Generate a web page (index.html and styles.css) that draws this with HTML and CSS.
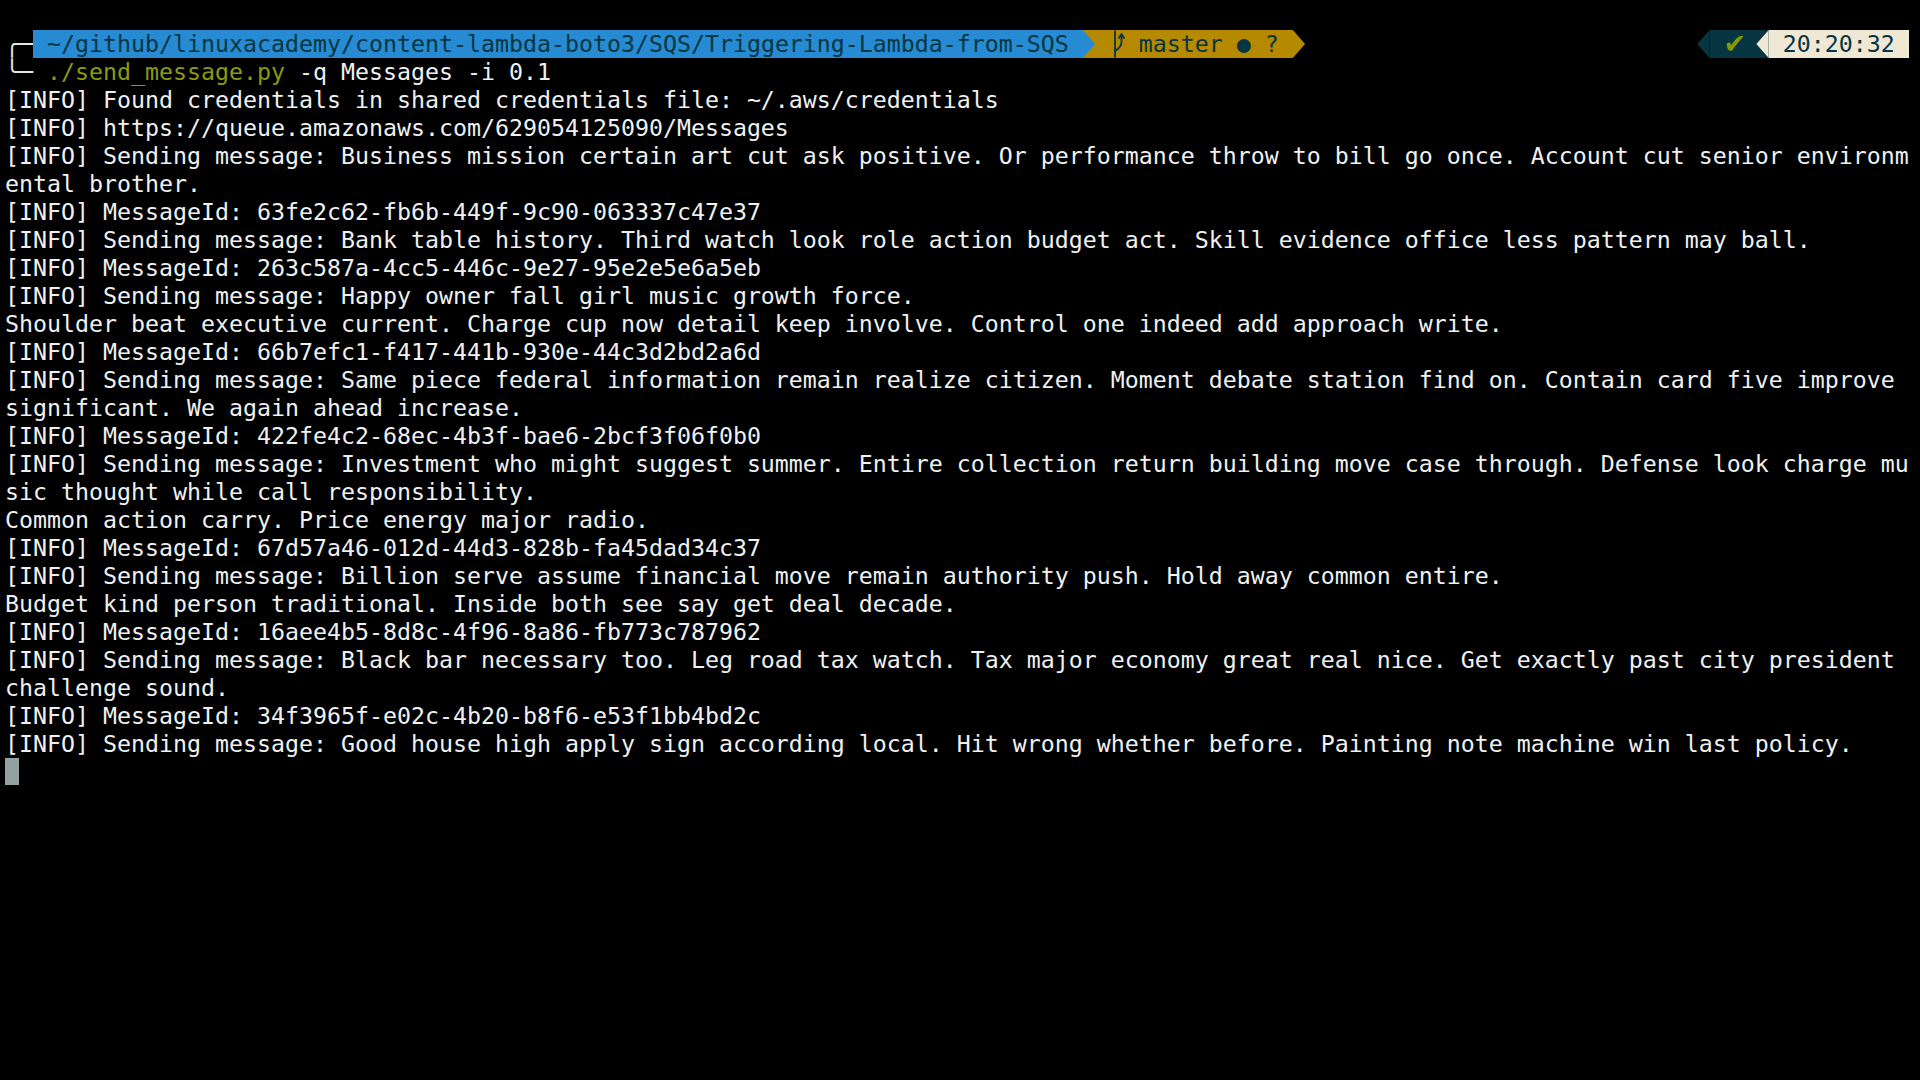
FILE: index.html
```html
<!DOCTYPE html>
<html lang="en">
<head>
<meta charset="utf-8">
<title>Terminal</title>
<link rel="stylesheet" href="styles.css">
</head>
<body>
<div class="term">
  <div class="row prompt">
    <span class="corner">╭─</span><span class="seg seg-dir"> ~/github/linuxacademy/content-lambda-boto3/SQS/Triggering-Lambda-from-SQS </span><span class="arrow arrow-dir"></span><span class="seg seg-git"> <span class="cell"><svg class="branch" viewBox="0 0 14 28" width="14" height="28"><path d="M4 1 V27" /><path d="M10.5 5 V12 Q10.5 17 4 21" /><path d="M8 8 L10.5 4 L13 8" /></svg></span> master <span class="dot">●</span> ? </span><span class="arrow arrow-git"></span><span class="spacer"></span><span class="larrow larrow-status"></span><span class="seg seg-status"> <span class="cell check">✔</span> </span><span class="larrow larrow-time"></span><span class="seg seg-time"> 20:20:32 </span>
  </div>
  <div class="row"><span class="corner">╰─</span> <span class="cmd">./send_message.py</span> -q Messages -i 0.1</div>
  <div class="row">[INFO] Found credentials in shared credentials file: ~/.aws/credentials</div>
  <div class="row">[INFO] https://queue.amazonaws.com/629054125090/Messages</div>
  <div class="row">[INFO] Sending message: Business mission certain art cut ask positive. Or performance throw to bill go once. Account cut senior environm</div>
  <div class="row">ental brother.</div>
  <div class="row">[INFO] MessageId: 63fe2c62-fb6b-449f-9c90-063337c47e37</div>
  <div class="row">[INFO] Sending message: Bank table history. Third watch look role action budget act. Skill evidence office less pattern may ball.</div>
  <div class="row">[INFO] MessageId: 263c587a-4cc5-446c-9e27-95e2e5e6a5eb</div>
  <div class="row">[INFO] Sending message: Happy owner fall girl music growth force.</div>
  <div class="row">Shoulder beat executive current. Charge cup now detail keep involve. Control one indeed add approach write.</div>
  <div class="row">[INFO] MessageId: 66b7efc1-f417-441b-930e-44c3d2bd2a6d</div>
  <div class="row">[INFO] Sending message: Same piece federal information remain realize citizen. Moment debate station find on. Contain card five improve </div>
  <div class="row">significant. We again ahead increase.</div>
  <div class="row">[INFO] MessageId: 422fe4c2-68ec-4b3f-bae6-2bcf3f06f0b0</div>
  <div class="row">[INFO] Sending message: Investment who might suggest summer. Entire collection return building move case through. Defense look charge mu</div>
  <div class="row">sic thought while call responsibility.</div>
  <div class="row">Common action carry. Price energy major radio.</div>
  <div class="row">[INFO] MessageId: 67d57a46-012d-44d3-828b-fa45dad34c37</div>
  <div class="row">[INFO] Sending message: Billion serve assume financial move remain authority push. Hold away common entire.</div>
  <div class="row">Budget kind person traditional. Inside both see say get deal decade.</div>
  <div class="row">[INFO] MessageId: 16aee4b5-8d8c-4f96-8a86-fb773c787962</div>
  <div class="row">[INFO] Sending message: Black bar necessary too. Leg road tax watch. Tax major economy great real nice. Get exactly past city president </div>
  <div class="row">challenge sound.</div>
  <div class="row">[INFO] MessageId: 34f3965f-e02c-4b20-b8f6-e53f1bb4bd2c</div>
  <div class="row">[INFO] Sending message: Good house high apply sign according local. Hit wrong whether before. Painting note machine win last policy.</div>
  <div class="row"><span class="cursor"></span></div>
</div>
</body>
</html>
```

FILE: styles.css
```css
html, body {
  margin: 0;
  padding: 0;
  background: #000;
}

body {
  width: 1920px;
  height: 1080px;
  overflow: hidden;
}

.term {
  font-family: "DejaVu Sans Mono", "Liberation Mono", monospace;
  font-size: 23.25px;
  line-height: 28px;
  color: #f0f0f0;
  width: 136ch;
  padding: 30px 0 0 5px;
}

.row {
  height: 28px;
  white-space: pre;
}

.prompt {
  display: flex;
  align-items: stretch;
}

.corner {
  color: #e6e6e6;
  flex: none;
}

.seg {
  display: block;
  flex: none;
  height: 28px;
  line-height: 28px;
  white-space: pre;
  color: #073642;
}

.cell {
  display: inline-block;
  width: 1ch;
  height: 28px;
  vertical-align: top;
  text-align: center;
  overflow: visible;
}

.branch {
  display: block;
}

.seg-dir { background: #268bd2; }
.seg-git { background: #b58900; }
.seg-status { background: #073642; }
.seg-time { background: #eee8d5; color: #073642; }

.branch path {
  fill: none;
  stroke: #073642;
  stroke-width: 1.8;
  stroke-linecap: round;
  stroke-linejoin: round;
}

.dot {
  color: #073642;
}

.check {
  color: #859900;
  font-family: "DejaVu Sans", sans-serif;
  font-size: 27px;
  line-height: 28px;
  white-space: nowrap;
}

.arrow, .larrow {
  display: block;
  width: 1ch;
  height: 28px;
  position: relative;
  flex: none;
}

.arrow::before, .larrow::before {
  content: "";
  position: absolute;
  inset: 0;
}

.arrow::before {
  clip-path: polygon(0 0, 88% 50%, 0 100%);
}

.larrow::before {
  clip-path: polygon(100% 0, 12% 50%, 100% 100%);
}

.arrow-dir { background: #b58900; }
.arrow-dir::before { background: #268bd2; }

.arrow-git { background: #000; }
.arrow-git::before { background: #b58900; }

.larrow-status { background: #000; }
.larrow-status::before { background: #073642; }

.larrow-time { background: #073642; }
.larrow-time::before { background: #eee8d5; }

.spacer {
  flex: 1;
}

.cmd {
  color: #8a9a12;
}

.cursor {
  display: inline-block;
  width: 1ch;
  height: 27px;
  background: #93a1a1;
  vertical-align: top;
}
```
